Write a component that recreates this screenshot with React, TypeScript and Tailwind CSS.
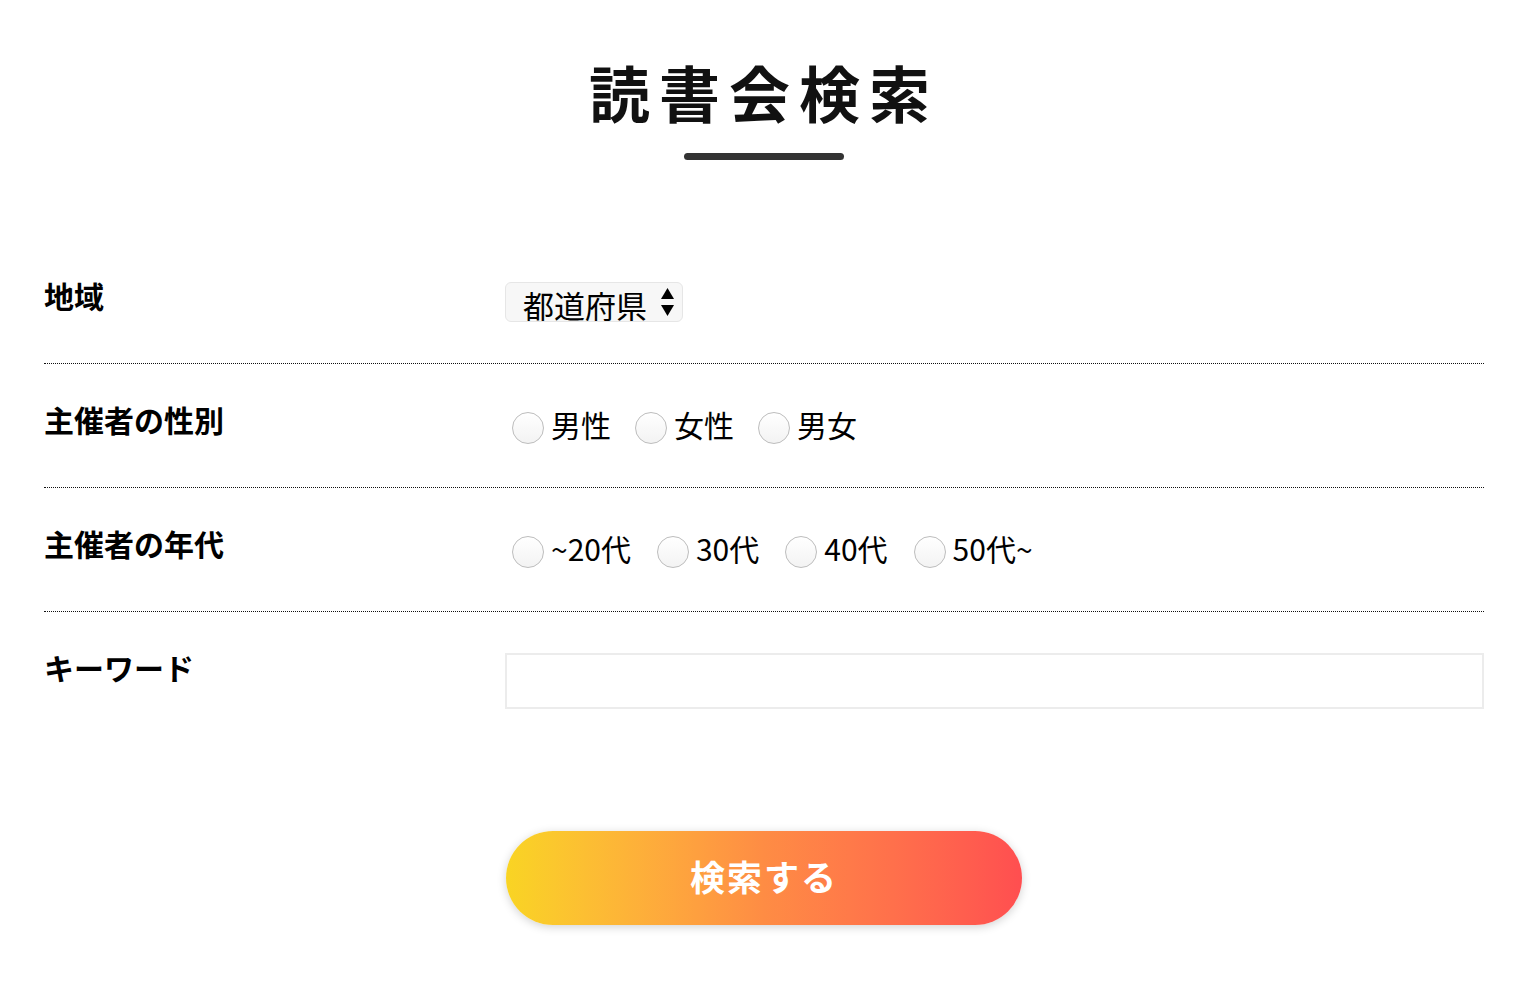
import { useState } from 'react';

const font = { fontFamily: '"Noto Sans CJK JP", "Noto Sans", sans-serif' };

function Radio({ name, label, checked, onChange }: { name: string; label: string; checked: boolean; onChange: () => void }) {
    return (
        <label className="flex items-center cursor-pointer">
            <input
                type="radio"
                name={name}
                checked={checked}
                onChange={onChange}
                className="appearance-none w-[32px] h-[32px] rounded-full border-[1.5px] border-[#bdbdbd] bg-gradient-to-b from-white to-[#f3f3f3] checked:border-[#888] checked:bg-[radial-gradient(circle,#555_0_30%,#fff_36%)]"
            />
            <span className="ml-[7px] text-[30px] leading-[32px] text-black -mt-[9px]">{label}</span>
        </label>
    );
}

export default function App() {
    const [gender, setGender] = useState('');
    const [age, setAge] = useState('');

    return (
        <div className="min-h-screen bg-white pl-[44px] pr-[32px]" style={font}>
            <div className="flex flex-col items-center pt-[55px]">
                <h1 className="text-[61px] leading-[74px] font-bold tracking-[9px] text-[#111]">読書会検索</h1>
                <div className="mt-[24px] w-[160px] h-[7px] rounded-full bg-[#333]" />
            </div>

            <form className="mt-[80px]" onSubmit={e => e.preventDefault()}>
                <div className="flex items-start h-[124px] pt-[34px] border-b border-dotted border-[#111]">
                    <div className="w-[461px] text-[30px] leading-[42px] font-bold text-black">地域</div>
                    <div className="mt-[8px] relative">
                        <select className="appearance-none w-[178px] h-[40px] pl-[17px] pr-[30px] pt-[4px] bg-[#f7f7f7] border border-[#e6e6e6] rounded-[6px] text-[31px] leading-[36px] text-black outline-none">
                            <option>都道府県</option>
                            <option>東京都</option>
                            <option>大阪府</option>
                        </select>
                        <svg className="absolute right-[8px] top-[5px] pointer-events-none" width="15" height="30" viewBox="0 0 15 30">
                            <path d="M7.5 1 L14 12 L1 12 Z" fill="#000" />
                            <path d="M7.5 29 L14 18 L1 18 Z" fill="#000" />
                        </svg>
                    </div>
                </div>

                <div className="flex items-start h-[124px] pt-[34px] border-b border-dotted border-[#111]">
                    <div className="w-[461px] text-[30px] leading-[42px] font-bold text-black">主催者の性別</div>
                    <div className="mt-[14px] ml-[7px] flex items-center gap-[24px]">
                        {['男性', '女性', '男女'].map(g => (
                            <Radio key={g} name="gender" label={g} checked={gender === g} onChange={() => setGender(g)} />
                        ))}
                    </div>
                </div>

                <div className="flex items-start h-[124px] pt-[34px] border-b border-dotted border-[#111]">
                    <div className="w-[461px] text-[30px] leading-[42px] font-bold text-black">主催者の年代</div>
                    <div className="mt-[14px] ml-[7px] flex items-center gap-[26px]">
                        {['~20代', '30代', '40代', '50代~'].map(a => (
                            <Radio key={a} name="age" label={a} checked={age === a} onChange={() => setAge(a)} />
                        ))}
                    </div>
                </div>

                <div className="flex items-start pt-[34px]">
                    <div className="w-[461px] text-[30px] leading-[42px] font-bold text-black">キーワード</div>
                    <input
                        type="text"
                        className="mt-[7px] flex-1 h-[56px] border-2 border-[#ececec] bg-white px-3 text-[24px] outline-none"
                    />
                </div>

                <div className="flex justify-center pt-[122px] pb-[70px]">
                    <button
                        type="submit"
                        className="w-[516px] h-[94px] pb-[4px] rounded-full bg-gradient-to-r from-[#f9d423] via-[#fe8c44] to-[#ff4e50] text-white text-[35px] font-bold tracking-[2px] shadow-[0_2px_10px_rgba(0,0,0,0.18)]"
                    >
                        検索する
                    </button>
                </div>
            </form>
        </div>
    );
}
